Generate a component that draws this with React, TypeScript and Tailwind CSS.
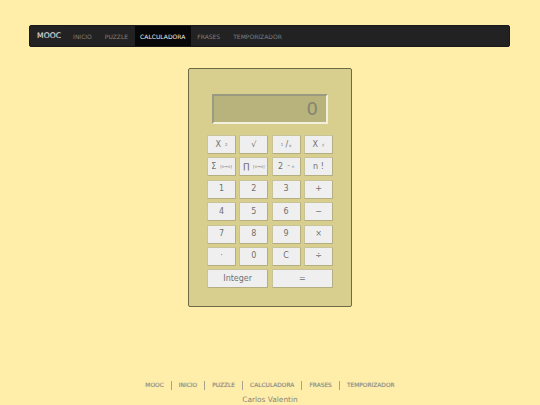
const navItems = ["INICIO", "PUZZLE", "CALCULADORA", "FRASES", "TEMPORIZADOR"];
const footerItems = ["MOOC", "INICIO", "PUZZLE", "CALCULADORA", "FRASES", "TEMPORIZADOR"];

const Key = ({
  children,
  wide = false,
}: {
  children: React.ReactNode;
  wide?: boolean;
}) => (
  <button
    type="button"
    className={`h-[19px] flex items-center justify-center rounded-[1px] bg-[#efefef] border border-[#c9c39a] border-b-[#b5ae82] border-r-[#b5ae82] text-[8px] leading-none text-[#707070] ${
      wide ? "col-span-2" : ""
    }`}
  >
    {children}
  </button>
);

const Sup = ({ children }: { children: React.ReactNode }) => (
  <span className="ml-[4px] text-[4px] text-[#777]">{children}</span>
);

export default function App() {
  return (
    <div className="w-[540px] h-[405px] overflow-hidden flex flex-col items-center bg-[#ffeeaa] font-['DejaVu_Sans',sans-serif]">
      <nav className="mt-[25px] mr-[1px] w-[481px] h-[22px] shrink-0 flex items-stretch rounded-[2px] bg-[#222222] border border-[#1a1a1a] pl-[2px]">
        <span className="flex items-center pl-[5px] pr-[5.5px] text-[7.7px] font-medium text-[#dddddd] [text-shadow:0_0_1px_#777777]">
          MOOC
        </span>
        {navItems.map((item) =>
          item === "CALCULADORA" ? (
            <span
              key={item}
              className="flex items-center px-[5.5px] bg-[#080808] text-[6px] text-[#eeeeee]"
            >
              {item}
            </span>
          ) : (
            <span
              key={item}
              className="flex items-center px-[6.5px] text-[6px] text-[#808080]"
            >
              {item}
            </span>
          )
        )}
      </nav>

      <main className="mt-[21px] w-[164px] h-[239px] shrink-0 flex flex-col items-center rounded-[2px] bg-[#d8cf8f] border border-[#6f6a45]">
        <div className="mt-[25px] w-[116px] h-[30px] shrink-0 flex items-center justify-end pr-[8px] bg-[#b8b27c] border-2 border-t-[#9a9a80] border-l-[#9a9a80] border-r-[#f2f0dd] border-b-[#f2f0dd] text-[18px] leading-none text-[#85856f]">
          0
        </div>
        <div className="mt-[11px] w-[126px] grid grid-cols-4 gap-x-[3.3px] gap-y-[3.4px]">
          <Key>
            X<Sup>2</Sup>
          </Key>
          <Key>√</Key>
          <Key>
            <span className="text-[4px] mr-[2px]">1</span>/
            <span className="text-[4px] ml-[1px] mt-[3px]">x</span>
          </Key>
          <Key>
            X<Sup>y</Sup>
          </Key>
          <Key>
            Σ<Sup>[n→n]</Sup>
          </Key>
          <Key>
            ∏<Sup>[n→n]</Sup>
          </Key>
          <Key>
            2<Sup>^ n</Sup>
          </Key>
          <Key>n !</Key>
          {["1", "2", "3", "+", "4", "5", "6", "−", "7", "8", "9", "×", "·", "0", "C", "÷"].map(
            (k) => (
              <Key key={k}>{k}</Key>
            )
          )}
          <Key wide>Integer</Key>
          <Key wide>=</Key>
        </div>
      </main>

      <footer className="mt-[73px] flex flex-col items-center">
        <div className="flex items-center h-[11px]">
          {footerItems.map((item, i) => (
            <span
              key={item}
              className={`px-[7px] text-[5.9px] leading-[9px] font-medium text-[#8c8c80] [text-shadow:0_0_1px_#b5b5a5] ${
                i < footerItems.length - 1 ? "border-r border-[#a8a28a]" : ""
              }`}
            >
              {item}
            </span>
          ))}
        </div>
        <div className="mt-[4px] text-[7.4px] leading-[10px] text-[#85857a]">
          Carlos Valentin
        </div>
      </footer>
    </div>
  );
}
